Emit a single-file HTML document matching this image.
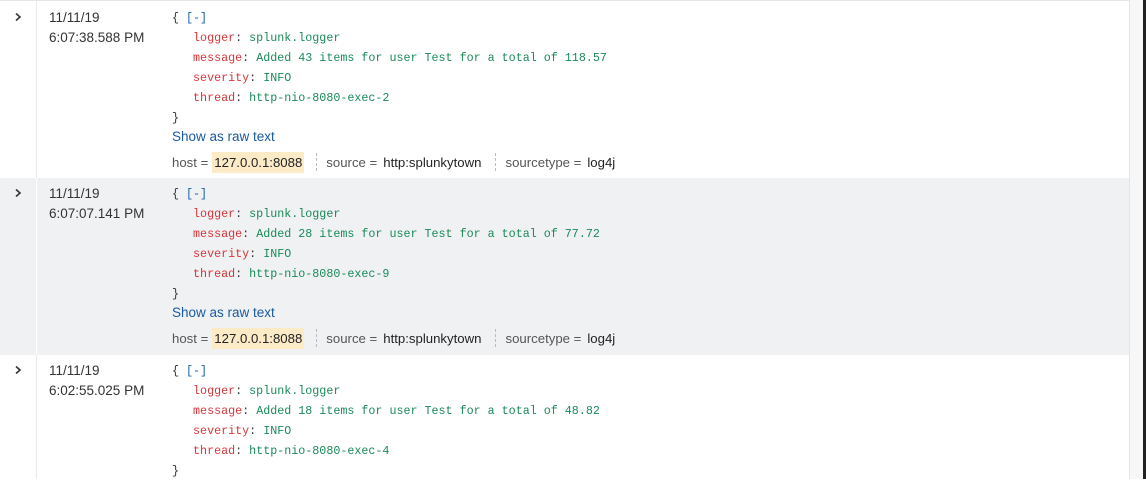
<!DOCTYPE html>
<html><head><style>
body{margin:0;width:1146px;height:479px;overflow:hidden;background:#fff;font-family:"Liberation Sans",sans-serif;position:relative}
.sb{position:absolute;left:1129px;top:0;width:14px;height:479px;background:#f7f7f7;border-left:1px solid #e4e4e4}
.dk{position:absolute;left:1143px;top:0;width:3px;height:479px;background:#222}
.row{position:absolute;left:0;width:1129px}
.g{background:#f0f1f3}
.vl{position:absolute;left:36px;top:0;bottom:0;width:1px;background:#e8e9eb}
.g .vl{background:#fff}
.arr{position:absolute;left:14px;width:8px;height:8px}
.dt{position:absolute;left:49px;font-size:13.5px;color:#333;line-height:20px}
.js{position:absolute;left:172px;font-family:"Liberation Mono",monospace;font-size:11.7px;line-height:20px;color:#333;white-space:pre}
.k{color:#d6363c}.v{color:#1a8a5a}.b{color:#1a5fa8}
.raw{position:absolute;left:172px;font-size:13.5px;color:#1a5a9e}
.f{position:absolute;left:172px;font-size:13.2px;color:#555;white-space:nowrap;display:flex;align-items:center;height:22px}
.f .val{color:#222;padding:3px 2px;margin:0 4px 0 4px}
.f .hl{background:#fdebc8}
.f .sep{border-left:1px dashed #bbb;height:18px;margin:0 9px 0 8px}
</style></head><body>
<div class="row" style="top:0;height:178px;border-top:1px solid #e4e6ea"><div class="vl"></div>
<svg class="arr" style="top:12px" viewBox="0 0 8 8"><path d="M2 0.5L6 4L2 7.5" fill="none" stroke="#333" stroke-width="1.6"/></svg>
<div class="dt" style="top:7px">11/11/19<br>6:07:38.588 PM</div>
<div class="js" style="top:7px">{ <span class="b">[-]</span>
   <span class="k">logger</span>: <span class="v">splunk.logger</span>
   <span class="k">message</span>: <span class="v">Added 43 items for user Test for a total of 118.57</span>
   <span class="k">severity</span>: <span class="v">INFO</span>
   <span class="k">thread</span>: <span class="v">http-nio-8080-exec-2</span>
}</div>
<div class="raw" style="top:128px">Show as raw text</div>
<div class="f" style="top:150px">host =<span class="val hl">127.0.0.1:8088</span><span class="sep"></span>source =<span class="val">http:splunkytown</span><span class="sep"></span>sourcetype =<span class="val">log4j</span></div>
</div>
<div class="row g" style="top:178px;height:177px"><div class="vl"></div>
<svg class="arr" style="top:11px" viewBox="0 0 8 8"><path d="M2 0.5L6 4L2 7.5" fill="none" stroke="#333" stroke-width="1.6"/></svg>
<div class="dt" style="top:6px">11/11/19<br>6:07:07.141 PM</div>
<div class="js" style="top:6px">{ <span class="b">[-]</span>
   <span class="k">logger</span>: <span class="v">splunk.logger</span>
   <span class="k">message</span>: <span class="v">Added 28 items for user Test for a total of 77.72</span>
   <span class="k">severity</span>: <span class="v">INFO</span>
   <span class="k">thread</span>: <span class="v">http-nio-8080-exec-9</span>
}</div>
<div class="raw" style="top:127px">Show as raw text</div>
<div class="f" style="top:149px">host =<span class="val hl">127.0.0.1:8088</span><span class="sep"></span>source =<span class="val">http:splunkytown</span><span class="sep"></span>sourcetype =<span class="val">log4j</span></div>
</div>
<div class="row" style="top:355px;height:124px"><div class="vl"></div>
<svg class="arr" style="top:11px" viewBox="0 0 8 8"><path d="M2 0.5L6 4L2 7.5" fill="none" stroke="#333" stroke-width="1.6"/></svg>
<div class="dt" style="top:6px">11/11/19<br>6:02:55.025 PM</div>
<div class="js" style="top:6px">{ <span class="b">[-]</span>
   <span class="k">logger</span>: <span class="v">splunk.logger</span>
   <span class="k">message</span>: <span class="v">Added 18 items for user Test for a total of 48.82</span>
   <span class="k">severity</span>: <span class="v">INFO</span>
   <span class="k">thread</span>: <span class="v">http-nio-8080-exec-4</span>
}</div>
</div>
<div class="sb"></div><div class="dk"></div>
</body></html>
